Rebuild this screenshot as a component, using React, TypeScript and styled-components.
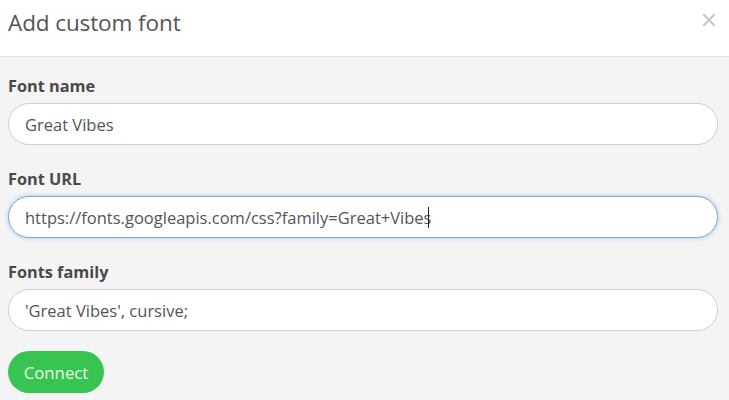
import styled, { createGlobalStyle } from "styled-components";

const GlobalStyle = createGlobalStyle`
    html, body {
        margin: 0;
        padding: 0;
        background: #f4f4f4;
    }
    body {
        font-family: "Open Sans", "Liberation Sans", sans-serif;
        color: #555555;
    }
`;

const fields = [
    { label: "Font name", value: "Great Vibes", focused: false },
    { label: "Font URL", value: "https://fonts.googleapis.com/css?family=Great+Vibes", focused: true },
    { label: "Fonts family", value: "'Great Vibes', cursive;", focused: false },
];

const App = () => {
    return (
        <StyledModal>
            <GlobalStyle />
            <StyledHeader>
                <StyledTitle>Add custom font</StyledTitle>
                <StyledClose aria-label="Close">
                    <svg width="12" height="12" viewBox="0 0 12 12">
                        <path d="M1 1 L11 11 M11 1 L1 11" stroke="#c6c6c6" strokeWidth="2.2" strokeLinecap="round" />
                    </svg>
                </StyledClose>
            </StyledHeader>
            <StyledBody>
                {fields.map((field) => (
                    <StyledField key={field.label}>
                        <StyledLabel>{field.label}</StyledLabel>
                        <StyledInput $focused={field.focused}>
                            {field.value}
                            {field.focused && <StyledCaret />}
                        </StyledInput>
                    </StyledField>
                ))}
                <StyledButton>Connect</StyledButton>
            </StyledBody>
        </StyledModal>
    );
};

const StyledModal = styled.div`
    width: 729px;
    height: 400px;
    display: flex;
    flex-direction: column;
    overflow: hidden;
    background: #f4f4f4;
`;

const StyledHeader = styled.div`
    height: 57px;
    display: flex;
    align-items: center;
    justify-content: space-between;
    padding: 0 14px 12px 8px;
    box-sizing: border-box;
    background: #ffffff;
    border-bottom: 1px solid #e2e2e2;
`;

const StyledTitle = styled.div`
    font-size: 22.5px;
    color: #555555;
    letter-spacing: -0.1px;
`;

const StyledClose = styled.div`
    display: flex;
    align-items: center;
    margin-top: -4px;
`;

const StyledBody = styled.div`
    display: flex;
    flex-direction: column;
    align-items: flex-start;
    padding: 18px 11px 0 8px;
`;

const StyledField = styled.div`
    display: flex;
    flex-direction: column;
    width: 100%;
    margin-bottom: 23px;
`;

const StyledLabel = styled.div`
    font-size: 16.3px;
    font-weight: 700;
    line-height: 22px;
    color: #4a4a4a;
    margin-bottom: 6px;
`;

const StyledInput = styled.div<{ $focused: boolean }>`
    height: 42px;
    box-sizing: border-box;
    display: flex;
    align-items: center;
    padding: 0 16px;
    border-radius: 21px;
    background: #ffffff;
    font-size: 16.5px;
    color: #555555;
    border: 1px solid ${(p) => (p.$focused ? "#7fa9cf" : "#cfcfcf")};
    box-shadow: ${(p) => (p.$focused ? "0 0 4px rgba(102, 175, 233, 0.6)" : "none")};
    white-space: nowrap;
`;

const StyledCaret = styled.span`
    display: inline-block;
    width: 1px;
    height: 21px;
    background: #222222;
    margin-left: -3px;
`;

const StyledButton = styled.button`
    margin-top: -3px;
    height: 42px;
    width: 96px;
    border: none;
    border-radius: 21px;
    background: #37c451;
    color: #e8fbe8;
    font-family: "Open Sans", "Liberation Sans", sans-serif;
    font-size: 16.8px;
    padding: 0;
    cursor: pointer;
`;

export default App;
